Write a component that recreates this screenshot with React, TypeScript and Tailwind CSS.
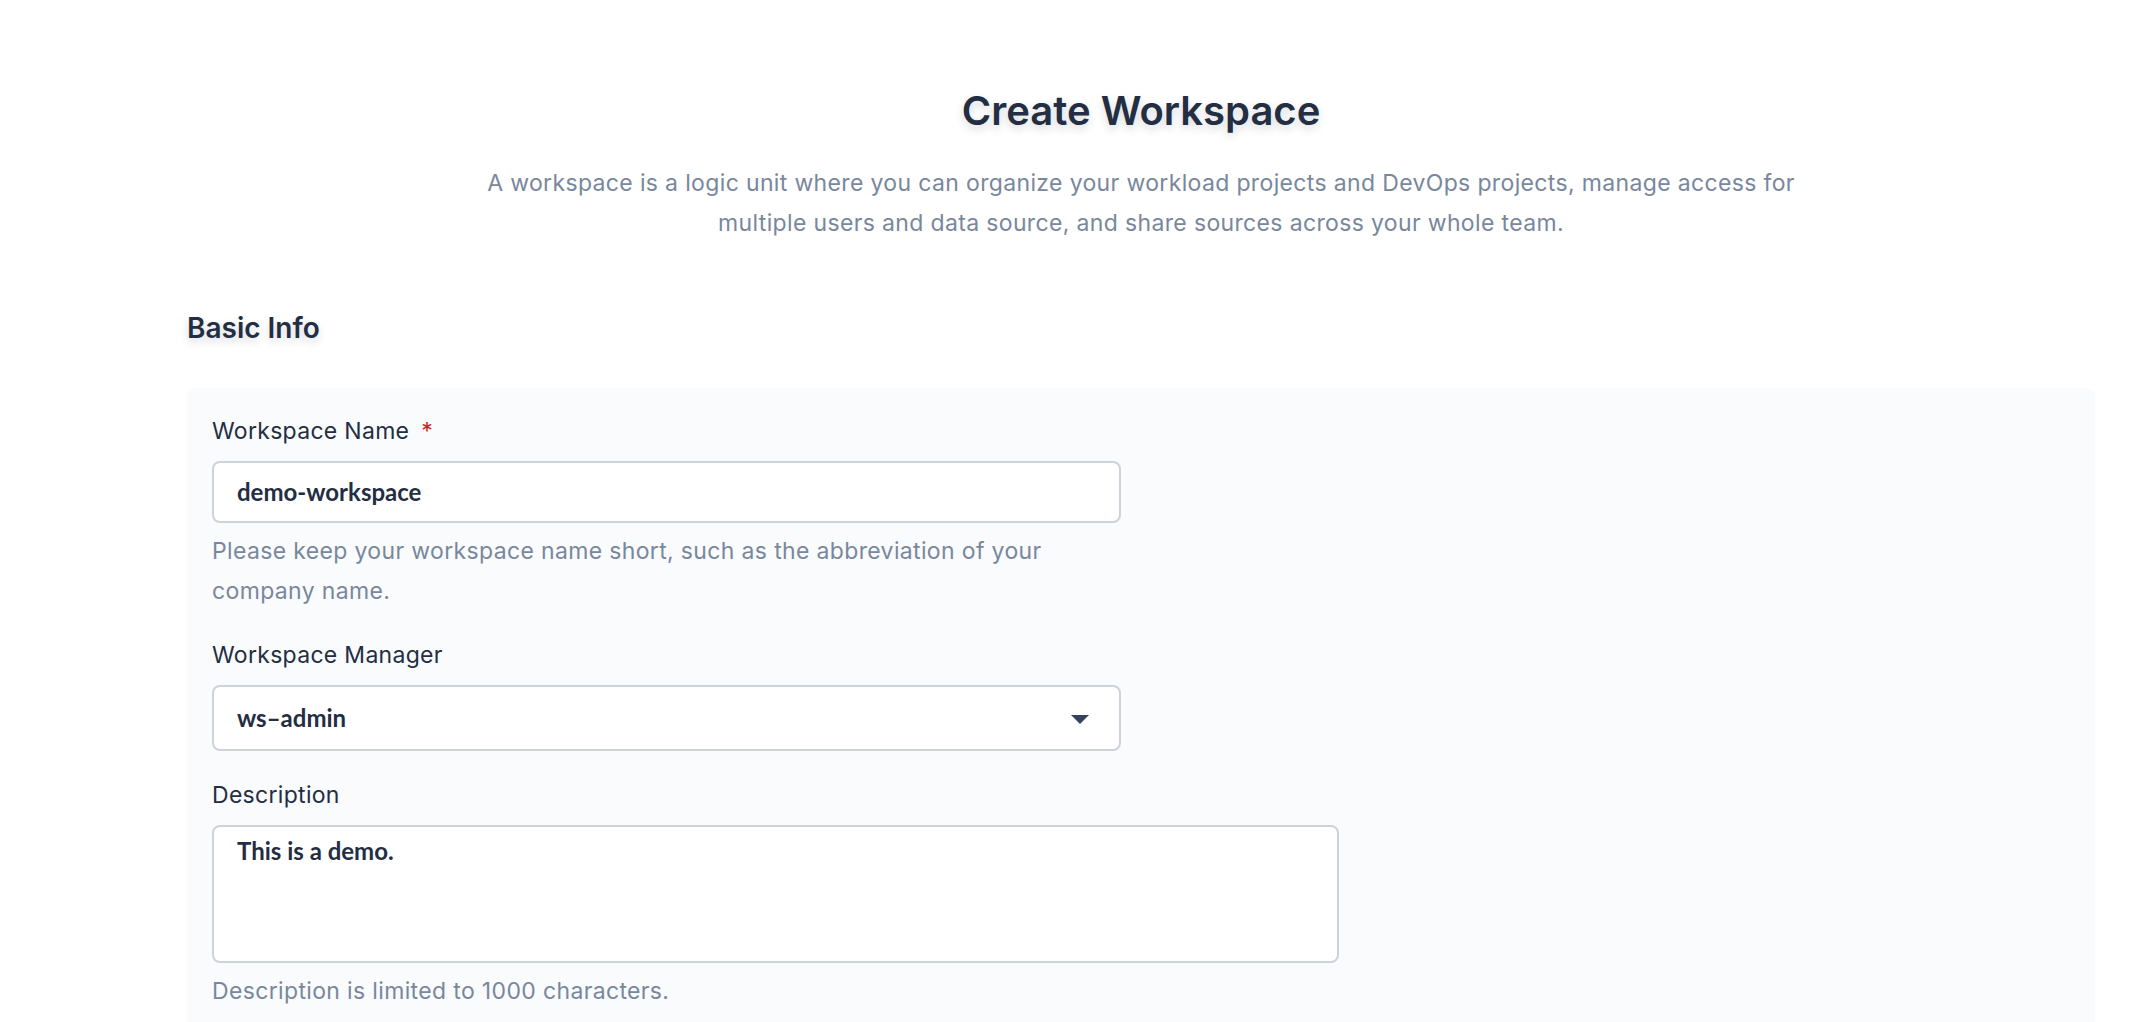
import React from "react";

const sans = "font-['Inter','Noto_Sans',sans-serif]";
const inputFont = "font-['Lato','Inter',sans-serif]";

function Label({ children, required }: { children: React.ReactNode; required?: boolean }) {
  return (
    <div className={`${sans} text-[23px] leading-[32px] tracking-[0.3px] text-[#242e42]`}>
      {children}
      {required && <span className="ml-[12px] text-[#ca2621]">*</span>}
    </div>
  );
}

function Help({ children }: { children: React.ReactNode }) {
  return (
    <div className={`${sans} mt-[8px] text-[23px] leading-[40px] tracking-[0.35px] text-[#79879c]`}>{children}</div>
  );
}

export default function App() {
  return (
    <div className="h-[1022px] w-full overflow-hidden bg-white">
      <div className="ml-[187px] mr-[61px]">
        <h1
          className={`${sans} pt-[83px] text-center text-[40px] leading-[56px] font-semibold text-[#242e42] [text-shadow:0_4px_8px_rgba(36,46,66,0.18)]`}
        >
          Create Workspace
        </h1>
        <p className={`${sans} mt-[24px] text-center text-[23px] leading-[40px] tracking-[0.35px] text-[#79879c]`}>
          A workspace is a logic unit where you can organize your workload projects and DevOps projects, manage access for
          <br />
          multiple users and data source, and share sources across your whole team.
        </p>
        <h2
          className={`${sans} mt-[65px] text-[28px] leading-[40px] font-semibold text-[#242e42] [text-shadow:0_4px_8px_rgba(36,46,66,0.18)]`}
        >
          Basic Info
        </h2>
        <div className="mt-[40px] h-[700px] rounded-[8px] bg-[#f9fbfd] pl-[25px] pt-[27px]">
          <Label required>Workspace Name</Label>
          <div
            className={`${inputFont} mt-[14px] flex h-[62px] w-[909px] items-center rounded-[8px] border-2 border-[#ccd3db] bg-white pl-[23px] text-[24px] font-bold text-[#242e42]`}
          >
            demo-workspace
          </div>
          <Help>
            Please keep your workspace name short, such as the abbreviation of your
            <br />
            company name.
          </Help>
          <div className="mt-[28px]">
            <Label>Workspace Manager</Label>
          </div>
          <div
            className={`${inputFont} mt-[14px] flex h-[66px] w-[909px] items-center justify-between rounded-[8px] border-2 border-[#ccd3db] bg-white pl-[23px] pr-[30px] text-[24px] font-bold text-[#242e42]`}
          >
            <span>ws–admin</span>
            <svg width="18" height="9" viewBox="0 0 18 9" className="mt-[2px]">
              <path d="M0 0 H18 L9 9 Z" fill="#36435c" />
            </svg>
          </div>
          <div className="mt-[28px]">
            <Label>Description</Label>
          </div>
          <div
            className={`${inputFont} mt-[14px] h-[138px] w-[1127px] rounded-[8px] border-2 border-[#ccd3db] bg-white pl-[23px] pt-[9px] text-[24px] leading-[30px] font-bold text-[#242e42]`}
          >
            This is a demo.
          </div>
          <Help>Description is limited to 1000 characters.</Help>
        </div>
      </div>
    </div>
  );
}
